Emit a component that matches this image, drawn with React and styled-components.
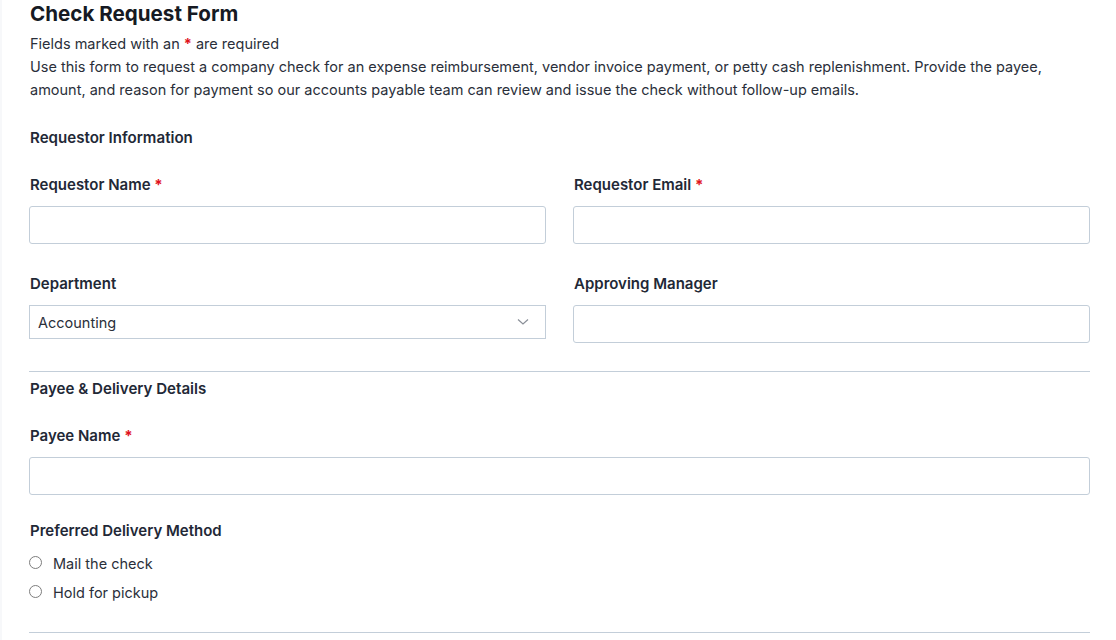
import React from "react";
import styled, { createGlobalStyle } from "styled-components";

const Global = createGlobalStyle`
  * { box-sizing: border-box; }
  html, body { margin: 0; padding: 0; background: #f7f8fa; }
  body {
    font-family: Inter, "Noto Sans", sans-serif;
    color: #1f2433;
    -webkit-font-smoothing: antialiased;
  }
`;

const Page = styled.div`
  margin-left: 2px;
  background: #ffffff;
  min-height: 640px;
  padding: 0 26px 0 27px;
`;

const Header = styled.header`
  display: flex;
  flex-direction: column;
  padding-left: 1px;
`;

const Title = styled.h1`
  margin: 0;
  padding-top: 2px;
  font-size: 20.6px;
  line-height: 24px;
  font-weight: 700;
  color: #161a23;
`;

const Note = styled.p`
  margin: 6px 0 0;
  font-size: 14.5px;
  line-height: 23px;
  color: #2a2f3a;
`;

const Description = styled.p`
  margin: 0;
  font-size: 14.5px;
  line-height: 23px;
  color: #2a2f3a;
`;

const Req = styled.span`
  color: #e0121b;
  font-weight: 700;
`;

const Section = styled.section`
  display: flex;
  flex-direction: column;
  padding-top: ${(p) => p.$top}px;
`;

const SectionTitle = styled.h2`
  margin: 0;
  padding-left: 1px;
  font-size: 15.1px;
  line-height: 20px;
  font-weight: 600;
  color: #222836;
`;

const Grid = styled.div`
  display: grid;
  grid-template-columns: 1fr 1fr;
  column-gap: 27px;
  row-gap: 30px;
  margin-top: 27px;
  align-items: start;
`;

const Field = styled.div`
  display: flex;
  flex-direction: column;
  margin-top: ${(p) => p.$top || 0}px;
`;

const Label = styled.label`
  padding-left: 1px;
  font-size: 15px;
  line-height: 20px;
  font-weight: 600;
  color: #222836;
  margin-bottom: 11px;
`;

const Input = styled.input`
  height: 38px;
  width: 100%;
  border: 1px solid #c3ced9;
  border-radius: 3px;
  background: #fff;
  font: inherit;
  padding: 0 10px;
  outline: none;
`;

const SelectWrap = styled.div`
  position: relative;
  height: 34px;
`;

const Select = styled.select`
  appearance: none;
  -webkit-appearance: none;
  width: 100%;
  height: 34px;
  border: 1px solid #c3ced9;
  border-radius: 0;
  background: #fff;
  font-family: Inter, "Noto Sans", sans-serif;
  font-size: 14.5px;
  color: #2a2f3a;
  padding: 0 30px 0 8px;
  outline: none;
`;

const Chevron = styled.svg`
  position: absolute;
  right: 17px;
  top: 13px;
  pointer-events: none;
`;

const Divider = styled.hr`
  margin: ${(p) => p.$top}px 0 0;
  border: 0;
  border-top: 1px solid #c3ced9;
  height: 0;
`;

const RadioGroup = styled.div`
  display: flex;
  flex-direction: column;
  gap: 9px;
  margin-top: 2px;
`;

const RadioRow = styled.label`
  display: flex;
  align-items: center;
  gap: 11px;
  font-size: 14.5px;
  line-height: 20px;
  color: #2a2f3a;
`;

const Radio = styled.input`
  margin: 0 0 4px 0;
  width: 13px;
  height: 13px;
  appearance: none;
  -webkit-appearance: none;
  border: 1px solid #7d7d7d;
  border-radius: 50%;
  background: #fff;
`;

export default function App() {
  return (
    <>
      <Global />
      <Page>
        <Header>
          <Title>Check Request Form</Title>
          <Note>
            Fields marked with an <Req>*</Req> are required
          </Note>
          <Description>
            Use this form to request a company check for an expense reimbursement, vendor invoice payment, or petty cash replenishment. Provide the payee, amount, and reason for payment so our accounts payable team can review and issue the check without follow-up emails.
          </Description>
        </Header>

        <Section $top={27}>
          <SectionTitle>Requestor Information</SectionTitle>
          <Grid>
            <Field>
              <Label>
                Requestor Name <Req>*</Req>
              </Label>
              <Input type="text" />
            </Field>
            <Field>
              <Label>
                Requestor Email <Req>*</Req>
              </Label>
              <Input type="email" />
            </Field>
            <Field>
              <Label>Department</Label>
              <SelectWrap>
                <Select defaultValue="Accounting">
                  <option>Accounting</option>
                  <option>Finance</option>
                  <option>Operations</option>
                </Select>
                <Chevron width="12" height="8" viewBox="0 0 12 8">
                  <path d="M1 1.5 L6 6 L11 1.5" fill="none" stroke="#8a8f98" strokeWidth="1.2" />
                </Chevron>
              </SelectWrap>
            </Field>
            <Field>
              <Label>Approving Manager</Label>
              <Input type="text" />
            </Field>
          </Grid>
        </Section>

        <Divider $top={28} />

        <Section $top={7}>
          <SectionTitle>Payee &amp; Delivery Details</SectionTitle>
          <Field $top={27}>
            <Label>
              Payee Name <Req>*</Req>
            </Label>
            <Input type="text" />
          </Field>
          <Field $top={26}>
            <Label>Preferred Delivery Method</Label>
            <RadioGroup>
              <RadioRow>
                <Radio type="radio" name="delivery" />
                Mail the check
              </RadioRow>
              <RadioRow>
                <Radio type="radio" name="delivery" />
                Hold for pickup
              </RadioRow>
            </RadioGroup>
          </Field>
        </Section>

        <Divider $top={29} />
      </Page>
    </>
  );
}
